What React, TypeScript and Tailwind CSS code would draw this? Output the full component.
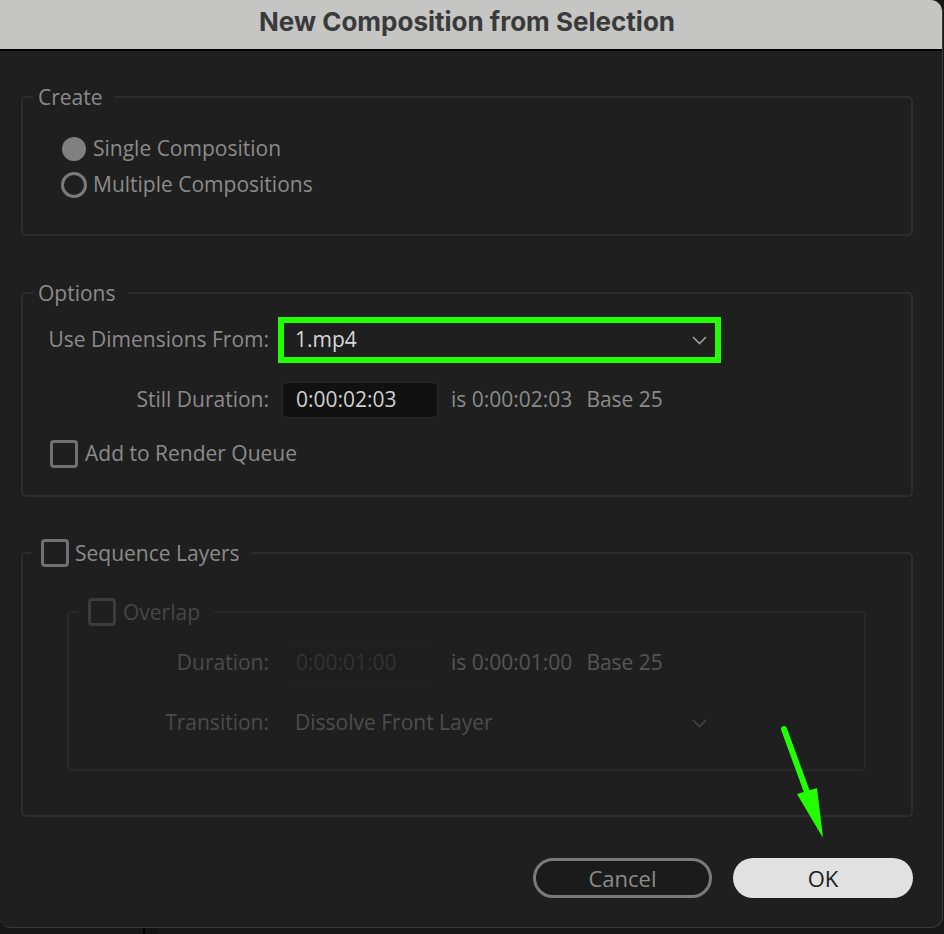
import React from "react";

const Chevron = ({ color = "#9c9c9c" }: { color?: string }) => (
  <svg width="15" height="9" viewBox="0 0 15 9" fill="none">
    <polyline points="1,1 7.5,7.5 14,1" stroke={color} strokeWidth="1.6" />
  </svg>
);

const Checkbox = ({ dim = false }: { dim?: boolean }) => (
  <span
    className={`inline-block w-[28px] h-[28px] rounded-[4px] border-[3px] ${
      dim ? "border-[#3c3c3c]" : "border-[#717171]"
    }`}
  />
);

const Radio = ({ on }: { on: boolean }) =>
  on ? (
    <span className="inline-block w-[24px] h-[24px] rounded-full bg-[#808080]" />
  ) : (
    <span className="inline-block w-[26px] h-[26px] rounded-full border-[3px] border-[#7a7a7a]" />
  );

const App = () => {
  return (
    <div className="w-[944px] h-[934px] bg-[#171717] font-['Open_Sans',sans-serif] text-[21px] text-[#8b8b8b] flex flex-col">
      <div className="relative w-[943px] h-[928px] bg-[#1f1f1f] border-r border-b border-[#3a3a3a] rounded-tr-[12px] rounded-br-[12px] rounded-bl-[10px] overflow-hidden flex flex-col">
        {/* title bar */}
        <div className="h-[51px] shrink-0 bg-[#c5c5c3] border-b-2 border-black flex items-center justify-center">
          <span className="font-['Inter',sans-serif] font-bold text-[26px] text-[#3a3a3a] -mt-[6px] ml-[-8px]">
            New Composition from Selection
          </span>
        </div>

        <div className="flex flex-col pl-[21px] pr-[29px] pt-[32px]">
          {/* Create */}
          <fieldset className="border-2 border-[#2d2d2d] rounded-[5px] pb-[31px]">
            <legend className="ml-[10px] pl-[5px] pr-[12px] leading-[28px]">Create</legend>
            <div className="pt-[20px] pl-[38px] flex flex-col">
              <div className="flex items-center h-[36px]">
                <span className="w-[26px] flex justify-center">
                  <Radio on />
                </span>
                <span className="ml-[6px]">Single Composition</span>
              </div>
              <div className="flex items-center h-[36px]">
                <span className="w-[26px] flex justify-center">
                  <Radio on={false} />
                </span>
                <span className="ml-[6px]">Multiple Compositions</span>
              </div>
            </div>
          </fieldset>

          {/* Options */}
          <fieldset className="mt-[43px] border-2 border-[#2d2d2d] rounded-[5px] pb-[27px]">
            <legend className="ml-[10px] pl-[5px] pr-[12px] leading-[28px]">Options</legend>
            <div className="pt-[10px] flex flex-col">
              <div className="flex items-center">
                <span className="w-[246px] text-right">Use Dimensions From:</span>
                <div className="ml-[9px] w-[443px] h-[46px] border-[6px] border-[#22ff00] flex items-center justify-between pl-[11px] pr-[8px]">
                  <span className="text-[#d6d6d6]">1.mp4</span>
                  <Chevron />
                </div>
              </div>
              <div className="flex items-center mt-[19px]">
                <span className="w-[246px] text-right">Still Duration:</span>
                <div className="ml-[13px] w-[156px] h-[36px] bg-[#111111] border border-[#2a2a2a] rounded-[4px] flex items-center pl-[13px]">
                  <span className="text-[#d0d0d0]">0:00:02:03</span>
                </div>
                <span className="ml-[13px]">is 0:00:02:03</span>
                <span className="ml-[14px]">Base 25</span>
              </div>
              <div className="flex items-center mt-[22px] h-[28px] pl-[27px]">
                <Checkbox />
                <span className="ml-[7px]">Add to Render Queue</span>
              </div>
            </div>
          </fieldset>

          {/* Sequence Layers */}
          <fieldset className="mt-[42px] border-2 border-[#2d2d2d] rounded-[5px] pb-[44px]">
            <legend className="ml-[8px] pl-[10px] pr-[12px] leading-[28px] flex items-center">
              <Checkbox />
              <span className="ml-[6px]">Sequence Layers</span>
            </legend>
            <fieldset className="mt-[31px] ml-[44px] mr-[45px] border-2 border-[#282828] rounded-[5px] pb-[26px] text-[#4b4b4b]">
              <legend className="ml-[9px] pl-[10px] pr-[14px] leading-[28px] flex items-center">
                <Checkbox dim />
                <span className="ml-[7px] text-[#474747]">Overlap</span>
              </legend>
              <div className="flex flex-col">
                <div className="flex items-center mt-[17px] h-[40px]">
                  <span className="w-[200px] text-right">Duration:</span>
                  <div className="ml-[13px] w-[156px] h-[40px] bg-[#1e1e1e] border border-[#222222] rounded-[6px] flex items-center pl-[13px]">
                    <span className="text-[#333333]">0:00:01:00</span>
                  </div>
                  <span className="ml-[13px] text-[#555555]">is 0:00:01:00</span>
                  <span className="ml-[14px] text-[#555555]">Base 25</span>
                </div>
                <div className="flex items-center mt-[20px] h-[40px]">
                  <span className="w-[200px] text-right">Transition:</span>
                  <div className="ml-[9px] w-[443px] h-[40px] flex items-center justify-between pl-[17px] pr-[14px]">
                    <span className="text-[#4d4d4d]">Dissolve Front Layer</span>
                    <Chevron color="#444444" />
                  </div>
                </div>
              </div>
            </fieldset>
          </fieldset>

          {/* buttons */}
          <div className="mt-[41px] flex justify-end gap-[21px]">
            <button className="w-[179px] h-[40px] rounded-full border-[3px] border-[#7a7a7a] bg-[#1b1b1b] text-[#8b8b8b] text-[22px] leading-none flex items-center justify-center">
              Cancel
            </button>
            <button className="w-[180px] h-[40px] rounded-full bg-[#e1e1e1] text-[#1b1b1b] text-[22px] leading-none flex items-center justify-center">
              OK
            </button>
          </div>
        </div>

        {/* annotation arrow */}
        <svg className="absolute left-[770px] top-[720px]" width="60" height="125" viewBox="0 0 60 125" fill="none">
          <line x1="14" y1="9" x2="37" y2="72" stroke="#22ff00" strokeWidth="6" strokeLinecap="round" />
          <polygon points="27,74 47,68 53,118" fill="#22ff00" />
        </svg>
      </div>
      <div className="flex-1 flex">
        <div className="w-[143px]" />
        <div className="w-[2px] bg-black" />
        <div className="w-[13px] bg-[#121212]" />
      </div>
    </div>
  );
};

export default App;
